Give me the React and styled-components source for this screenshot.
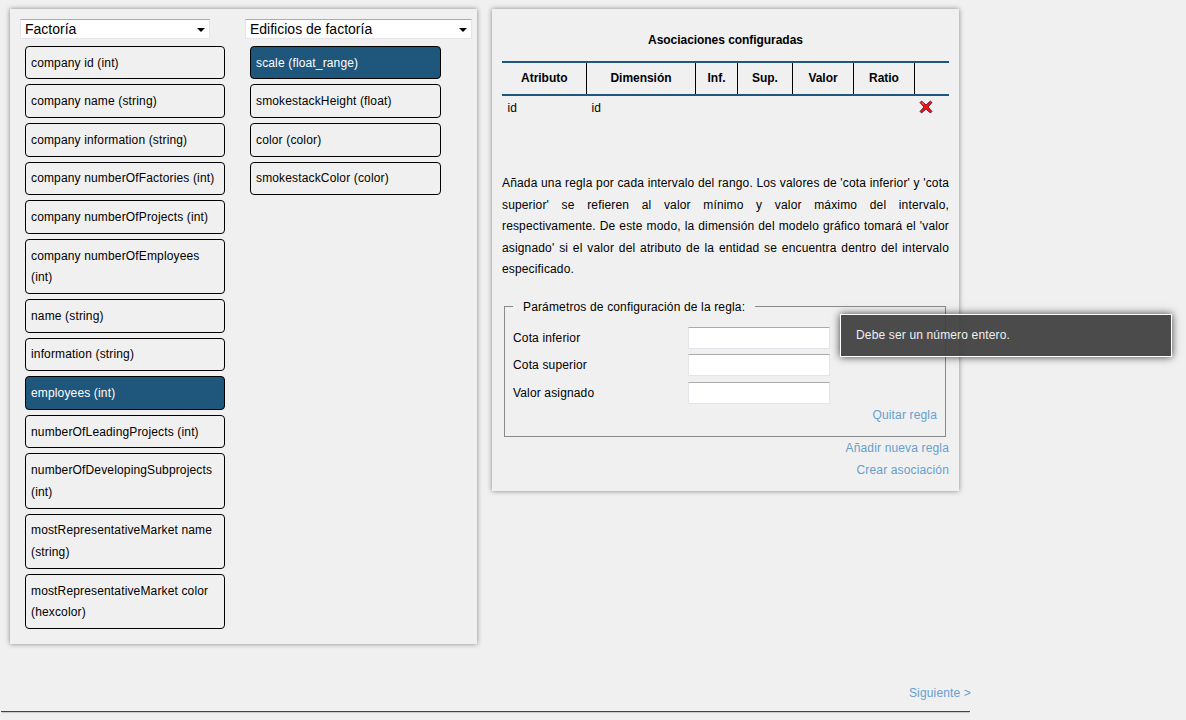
import React from "react";
import styled, { createGlobalStyle } from "styled-components";

const Global = createGlobalStyle`
  html, body { margin: 0; padding: 0; background: #f0f0f0; }
  body { font-family: "Liberation Sans", Arial, sans-serif; font-size: 12px; letter-spacing: 0.15px; color: #000; overflow: hidden; }
`;

const Page = styled.div`
  position: relative;
  width: 1186px;
  height: 720px;
  display: flex;
  flex-direction: column;
  box-sizing: border-box;
  padding-top: 9px;
`;

const Panels = styled.main`
  flex: 1;
  display: flex;
  align-items: flex-start;
  gap: 15px;
  padding-left: 10px;
`;

const Panel = styled.section`
  width: 467px;
  box-sizing: border-box;
  background: #f0f0f0;
  box-shadow: 0 0 5px rgba(0, 0, 0, 0.45);
`;

const LeftPanel = styled(Panel)`
  display: grid;
  grid-template-columns: 190px 227px;
  column-gap: 35px;
  padding: 10px 5px 10px 10px;
`;

const RightPanel = styled(Panel)`
  padding: 23px 10px 10px;
`;

const Column = styled.div`
  display: flex;
  flex-direction: column;
  align-items: flex-start;
`;

const SelectWrap = styled.div`
  position: relative;
  width: ${(p) => p.$width}px;
  height: 20px;
  margin-bottom: 6.9px;
  &::after {
    content: "";
    position: absolute;
    right: 5px;
    top: 9px;
    border-left: 4px solid transparent;
    border-right: 4px solid transparent;
    border-top: 4px solid #000;
    pointer-events: none;
  }
`;

const Select = styled.select`
  appearance: none;
  width: 100%;
  height: 20px;
  box-sizing: border-box;
  padding: 0 0 0 4px;
  background: #fff;
  border: 1px solid #e4e4ea;
  border-top-color: #ababab;
  border-radius: 0;
  font: 14px "Liberation Sans", Arial, sans-serif;
  color: #000;
  outline: none;
`;

const Item = styled.div`
  margin: 0 0 5px 5px;
  width: ${(p) => p.$width}px;
  box-sizing: border-box;
  padding: 5.8px 5px 4.21px;
  border: 1px solid #000;
  border-radius: 4px;
  line-height: 21.6px;
  background: ${(p) => (p.$active ? "#1f567b" : "transparent")};
  color: ${(p) => (p.$active ? "#fff" : "#000")};
`;

const Title = styled.h2`
  margin: 0 0 13px;
  font-size: 12px;
  line-height: 16px;
  font-weight: bold;
  letter-spacing: -0.05px;
  text-align: center;
`;

const Table = styled.table`
  width: 447px;
  table-layout: fixed;
  border-collapse: collapse;
  font-size: 12px;
`;

const Th = styled.th`
  width: ${(p) => p.$w}px;
  height: 33px;
  padding: 0 0 2px 1px;
  box-sizing: border-box;
  border-top: 2px solid #1f567b;
  border-bottom: 2px solid #1f567b;
  border-right: ${(p) => (p.$last ? "none" : "1px solid #000")};
  font-weight: bold;
  letter-spacing: -0.03px;
  text-align: center;
`;

const Td = styled.td`
  height: 22px;
  padding: 0 5px 0 5.5px;
  vertical-align: middle;
`;

const IconCell = styled(Td)`
  padding: 0 0 1px 5px;
  line-height: 0;
`;

const Text = styled.p`
  margin: 54px 0 0;
  line-height: 21.6px;
  text-align: justify;
`;

const Fieldset = styled.fieldset`
  margin: 18px 3px 0 2px;
  padding: 0 8px 13px;
  border: 1px solid #8a8a8a;
  min-width: 0;
`;

const Legend = styled.legend`
  padding: 0 10px;
  line-height: 16px;
`;

const FormFields = styled.div`
  display: flex;
  flex-direction: column;
  gap: 5.5px;
  margin-top: 11.8px;
`;

const FormRow = styled.div`
  display: flex;
  align-items: center;
  height: 22px;
`;

const Label = styled.label`
  width: 175px;
`;

const Input = styled.input`
  width: 142px;
  height: 22px;
  box-sizing: border-box;
  padding: 0 3px;
  background: #fff;
  border: 1px solid #e4e4ea;
  border-top-color: #ababab;
  outline: none;
`;

const LinkRow = styled.div`
  text-align: right;
  line-height: 22px;
`;

const FieldLinkRow = styled.div`
  margin-top: 3.7px;
  text-align: right;
  line-height: 16px;
`;

const Link = styled.a`
  color: #669fce;
  cursor: pointer;
`;

const FooterLink = styled(Link)`
  margin-right: -1px;
`;

const Footer = styled.footer`
  width: 969px;
  margin-left: 1px;
  height: 28px;
  margin-bottom: 8px;
  border-bottom: 1px solid #444;
  box-shadow: 0 2px 1px -1px rgba(0, 0, 0, 0.15);
  text-align: right;
  line-height: 20px;
`;

const Tooltip = styled.div`
  position: absolute;
  left: 840px;
  top: 314px;
  width: 332px;
  height: 43px;
  box-sizing: border-box;
  padding: 0 15px;
  line-height: 40px;
  background: rgba(64, 64, 64, 0.94);
  border: 1px solid #fff;
  color: #f0f0f0;
  box-shadow: 0 0 8px rgba(0, 0, 0, 0.75);
`;

const CrossIcon = () => (
  <svg width="14" height="14" viewBox="0 0 14 14" aria-hidden="true" shapeRendering="geometricPrecision">
    <path
      d="M1 2.6 L2.6 1 L7 4.9 L11.4 1 L13 2.6 L9.1 7 L13 11.4 L11.4 13 L7 9.1 L2.6 13 L1 11.4 L4.9 7 Z"
      fill="#f5101c"
      stroke="#2e0404"
      strokeWidth="0.7"
      strokeLinejoin="round"
    />
    <path d="M2.7 2.5 L4.8 4.4" stroke="#fbb4b4" strokeWidth="0.7" fill="none" />
  </svg>
);

const sources = [
  ["company id (int)"],
  ["company name (string)"],
  ["company information (string)"],
  ["company numberOfFactories (int)"],
  ["company numberOfProjects (int)"],
  ["company numberOfEmployees (int)"],
  ["name (string)"],
  ["information (string)"],
  ["employees (int)", true],
  ["numberOfLeadingProjects (int)"],
  ["numberOfDevelopingSubprojects (int)"],
  ["mostRepresentativeMarket name (string)"],
  ["mostRepresentativeMarket color (hexcolor)"],
];

const targets = [
  ["scale (float_range)", true],
  ["smokestackHeight (float)"],
  ["color (color)"],
  ["smokestackColor (color)"],
];

const headers = [
  ["Atributo", 84],
  ["Dimensión", 109],
  ["Inf.", 42],
  ["Sup.", 55],
  ["Valor", 61],
  ["Ratio", 61],
  ["", 35],
];

const fields = ["Cota inferior", "Cota superior", "Valor asignado"];

export default function App() {
  return (
    <Page>
      <Global />
      <Panels>
        <LeftPanel>
          <Column>
            <SelectWrap $width={190}>
              <Select defaultValue="Factoría">
                <option>Factoría</option>
              </Select>
            </SelectWrap>
            {sources.map(([label, active]) => (
              <Item key={label} $width={200} $active={active}>
                {label}
              </Item>
            ))}
          </Column>
          <Column>
            <SelectWrap $width={227}>
              <Select defaultValue="Edificios de factoría">
                <option>Edificios de factoría</option>
              </Select>
            </SelectWrap>
            {targets.map(([label, active]) => (
              <Item key={label} $width={191} $active={active}>
                {label}
              </Item>
            ))}
          </Column>
        </LeftPanel>
        <RightPanel>
          <Title>Asociaciones configuradas</Title>
          <Table>
            <thead>
              <tr>
                {headers.map(([h, w], i) => (
                  <Th key={i} $w={w} $last={i === headers.length - 1}>
                    {h}
                  </Th>
                ))}
              </tr>
            </thead>
            <tbody>
              <tr>
                <Td>id</Td>
                <Td>id</Td>
                <Td />
                <Td />
                <Td />
                <Td />
                <IconCell>
                  <CrossIcon />
                </IconCell>
              </tr>
            </tbody>
          </Table>
          <Text>
            Añada una regla por cada intervalo del rango. Los valores de 'cota inferior' y 'cota
            superior' se refieren al valor mínimo y valor máximo del intervalo, respectivamente. De
            este modo, la dimensión del modelo gráfico tomará el 'valor asignado' si el valor del
            atributo de la entidad se encuentra dentro del intervalo especificado.
          </Text>
          <Fieldset>
            <Legend>Parámetros de configuración de la regla:</Legend>
            <FormFields>
              {fields.map((f) => (
                <FormRow key={f}>
                  <Label>{f}</Label>
                  <Input type="text" />
                </FormRow>
              ))}
            </FormFields>
            <FieldLinkRow>
              <Link>Quitar regla</Link>
            </FieldLinkRow>
          </Fieldset>
          <LinkRow>
            <Link>Añadir nueva regla</Link>
          </LinkRow>
          <LinkRow>
            <Link>Crear asociación</Link>
          </LinkRow>
        </RightPanel>
      </Panels>
      <Footer>
        <FooterLink>Siguiente &gt;</FooterLink>
      </Footer>
      <Tooltip>Debe ser un número entero.</Tooltip>
    </Page>
  );
}
